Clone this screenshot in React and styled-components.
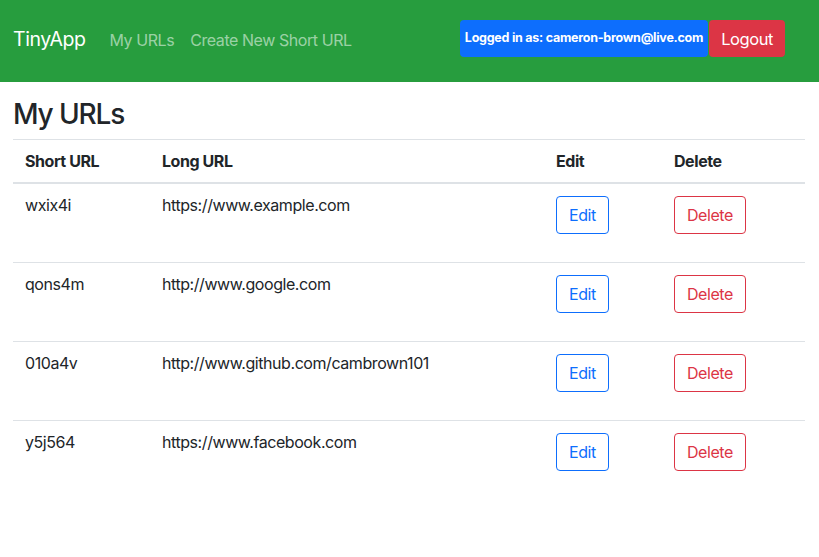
import React from "react";
import styled, { createGlobalStyle } from "styled-components";

const Global = createGlobalStyle`
  * { box-sizing: border-box; }
  body {
    margin: 0;
    font-family: Inter, "Noto Sans", sans-serif;
    font-size: 16px;
    line-height: 1.5;
    letter-spacing: -0.027em;
    color: #212529;
    background: #fff;
  }
`;

const Navbar = styled.nav`
  display: flex;
  align-items: flex-start;
  height: 82px;
  padding: 20px 34px 0 13px;
  background: #279d3e;
`;

const Brand = styled.a`
  font-size: 19.5px;
  line-height: 30px;
  margin-top: 4px;
  margin-right: 16px;
  color: #fff;
  text-decoration: none;
`;

const NavLinks = styled.div`
  display: flex;
  margin-top: 8px;
`;

const NavLink = styled.a`
  padding: 0 8px;
  font-size: 16px;
  line-height: 24px;
  color: rgba(255, 255, 255, 0.55);
  text-decoration: none;
`;

const Right = styled.div`
  margin-left: auto;
  display: flex;
  align-items: stretch;
  height: 37px;
  gap: 1px;
`;

const Badge = styled.span`
  display: flex;
  align-items: center;
  padding: 0 5px;
  background: #0d6efd;
  color: #fff;
  font-size: 12.5px;
  font-weight: 700;
  letter-spacing: -0.02em;
  border-radius: 4px;
`;

const LogoutButton = styled.button`
  font-family: inherit;
  font-size: 16.5px;
  line-height: 24px;
  letter-spacing: inherit;
  padding: 0 12px;
  border: none;
  border-radius: 4px;
  background: #dc3545;
  color: #fff;
`;

const Main = styled.main`
  padding: 15px 14px 0 13px;
`;

const Title = styled.h2`
  margin: 0 0 8px;
  font-size: 28px;
  font-weight: 500;
  line-height: 1.23;
  letter-spacing: -0.04em;
`;

const Table = styled.table`
  width: 792px;
  border-collapse: collapse;
  table-layout: fixed;
`;

const Th = styled.th`
  text-align: left;
  font-weight: 700;
  padding: 9px 12px 9px;
  border-top: 1px solid #dee2e6;
  border-bottom: 2px solid #dee2e6;
  width: ${(p) => p.$w}px;
`;

const Tr = styled.tr`
  & + & td {
    border-top: 1px solid #dee2e6;
  }
`;

const Td = styled.td`
  padding: 9px 12px 12px;
  vertical-align: top;
`;

const Form = styled.form`
  margin: 3px 0 16px;
`;

const OutlineButton = styled.button`
  font-family: inherit;
  font-size: 16px;
  line-height: 24px;
  letter-spacing: inherit;
  padding: 6px 12px;
  border-radius: 4px;
  background: transparent;
  border: 1px solid ${(p) => p.$color};
  color: ${(p) => p.$color};
`;

const urls = [
  ["wxix4i", "https://www.example.com"],
  ["qons4m", "http://www.google.com"],
  ["010a4v", "http://www.github.com/cambrown101"],
  ["y5j564", "https://www.facebook.com"],
];

export default function App() {
  return (
    <>
      <Global />
      <Navbar>
        <Brand href="#">TinyApp</Brand>
        <NavLinks>
          <NavLink href="#">My URLs</NavLink>
          <NavLink href="#">Create New Short URL</NavLink>
        </NavLinks>
        <Right>
          <Badge>Logged in as: cameron-brown@live.com</Badge>
          <LogoutButton>Logout</LogoutButton>
        </Right>
      </Navbar>
      <Main>
        <Title>My URLs</Title>
        <Table>
          <thead>
            <tr>
              <Th $w={137}>Short URL</Th>
              <Th $w={394}>Long URL</Th>
              <Th $w={118}>Edit</Th>
              <Th $w={143}>Delete</Th>
            </tr>
          </thead>
          <tbody>
            {urls.map(([id, long]) => (
              <Tr key={id}>
                <Td>{id}</Td>
                <Td>{long}</Td>
                <Td>
                  <Form onSubmit={(e) => e.preventDefault()}>
                    <OutlineButton $color="#0d6efd">Edit</OutlineButton>
                  </Form>
                </Td>
                <Td>
                  <Form onSubmit={(e) => e.preventDefault()}>
                    <OutlineButton $color="#dc3545">Delete</OutlineButton>
                  </Form>
                </Td>
              </Tr>
            ))}
          </tbody>
        </Table>
      </Main>
    </>
  );
}
